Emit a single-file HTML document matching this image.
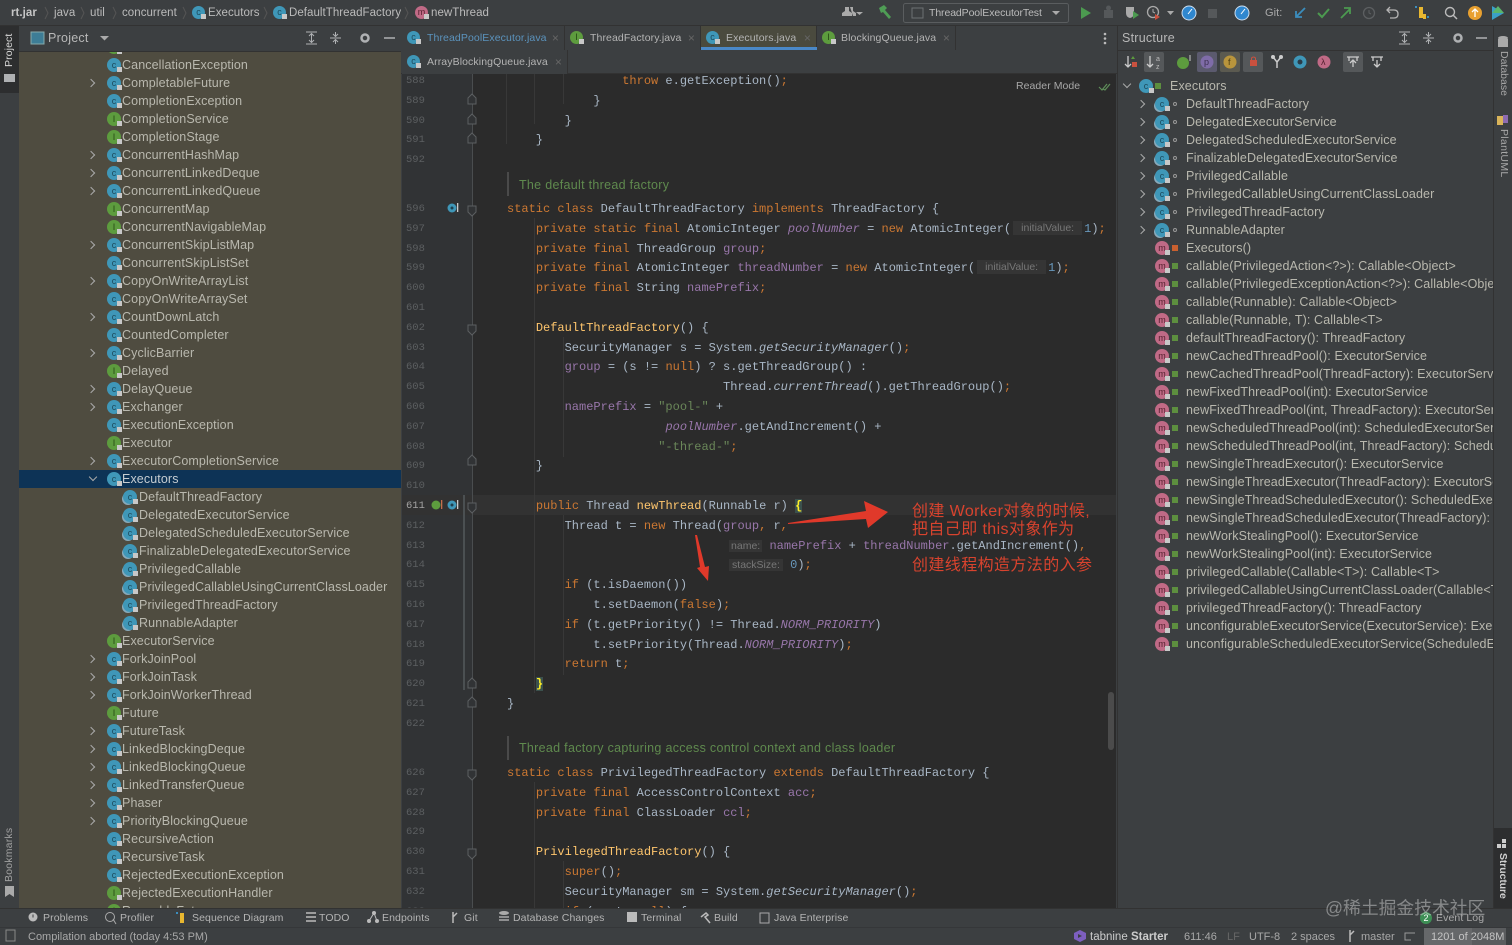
<!DOCTYPE html>
<html><head><meta charset="utf-8"><style>
*{box-sizing:border-box}
html,body{margin:0;padding:0;width:1512px;height:945px;overflow:hidden;background:#3c3f41;font-family:"Liberation Sans","Noto Sans CJK SC",sans-serif;color:#bbb}
body{filter:blur(.3px)}
.p{position:absolute}
.t{position:absolute;white-space:pre;font-size:11.5px;line-height:14px;letter-spacing:.05px}
#tree{left:19px;top:52px;width:382px;height:856px;background:#4f4c40;overflow:hidden}
#tree .in{position:absolute;top:-14px;left:0;width:382px}
.r{height:18px;line-height:19.5px;font-size:12.5px;letter-spacing:.11px;white-space:pre;position:relative;color:#b9b8ae}
.r.k{padding-left:103px}
.r.n{padding-left:120px}
.sel{background:#0d3356;color:#c6cdd2}
.a{position:absolute;width:6px;height:6px;border-top:1.3px solid #aaa;border-right:1.3px solid #aaa;transform:rotate(45deg);left:69px;top:6px}
.a.d{transform:rotate(135deg);top:4px;left:71px}
.ic{position:absolute;width:14px;height:14px;border-radius:50%;top:2px;font:normal 9px/14px "Liberation Sans",sans-serif;color:#1c4a5c;text-align:center;left:88px;background:#3f97b8;letter-spacing:0}
.ic:after{content:"";position:absolute;right:-1px;bottom:0;width:5px;height:5px;background:#c8c8c8}
.ic.g{background:#5d9c3e;color:#274a15}
.ic.m{background:#c06a86;color:#55202f}
.ic.nest{left:104px;box-shadow:-2px 2px 0 -1px #8ab}
.ln{position:absolute;left:406px;font:10.5px/19.8px "Liberation Mono",monospace;color:#5c5f61;white-space:pre}
.c{position:absolute;left:507px;font:12px/19.8px "Liberation Mono",monospace;color:#a9b7c6;white-space:pre}
.c u{text-decoration:none;color:#cc7832}.c s{text-decoration:none;color:#ffc66d}.c em{font-style:normal;color:#9876aa}.c i{font-style:italic;color:#9876aa}.c b{font-weight:normal;color:#6a8759}.c q{quotes:none;color:#6897bb}
.h{display:inline-block;width:69px;height:14px;font:10.5px/14px "Liberation Sans",sans-serif;color:#777;background:#353535;text-align:center;margin:0 2px 0 2px;vertical-align:1px}
.doc{position:absolute;left:519px;font:12.5px/20px "Liberation Sans",sans-serif;letter-spacing:.3px;color:#5f8a4e;white-space:pre}
.tab{position:absolute;height:24px;font-size:10.5px;line-height:24px;letter-spacing:.1px;white-space:pre;color:#b4b4b4;background:#3c3f41;border-right:1px solid #323232}
.tab .ic{top:5px;left:5px;width:13px;height:13px;line-height:13px}
.tab .x{position:absolute;right:5px;top:0;color:#666;font-size:12px}
.v{position:absolute;transform-origin:0 0;white-space:pre;font-size:10.5px;letter-spacing:.1px}
.b{position:absolute;top:911px;font-size:10.5px;line-height:14px;letter-spacing:.1px;white-space:pre;color:#b4b4b4}
.s{position:absolute;top:930px;font-size:11px;line-height:14px;letter-spacing:0;white-space:pre;color:#a8a8a8}
.box{position:absolute;top:52px;width:20px;height:20px;background:#55585a;border-radius:2px}
.dot{position:absolute;top:7px;width:4px;height:4px;border:1px solid #999;border-radius:50%;left:56px}
.lk{position:absolute;top:6px;left:55px;width:6px;height:6px;background:#5d8f3f}
.r.st{padding-left:69px}
</style></head><body>

<!-- top bar -->
<div class="p" style="left:0;top:0;width:1512px;height:26px;background:#3c3f41;border-bottom:1px solid #323232"></div>
<div class="t" style="left:11px;top:6px;color:#c6c6c6;font-weight:bold">rt.jar</div>
<div class="t" style="left:54px;top:6px">java</div>
<div class="t" style="left:90px;top:6px">util</div>
<div class="t" style="left:122px;top:6px">concurrent</div>
<div class="t" style="left:208px;top:6px">Executors</div>
<div class="t" style="left:289px;top:6px">DefaultThreadFactory</div>
<div class="t" style="left:431px;top:6px">newThread</div>
<i class="ic" style="left:192px;top:6px;width:13px;height:13px;line-height:13px">c</i>
<i class="ic" style="left:273px;top:6px;width:13px;height:13px;line-height:13px">c</i>
<i class="ic m" style="left:415px;top:6px;width:13px;height:13px;line-height:13px">m</i>
<svg class="p" style="left:0;top:0" width="1512" height="26" fill="none">
<g stroke="#555" stroke-width="1"><path d="M45 7l3 6-3 6M81 7l3 6-3 6M113 7l3 6-3 6M183 7l3 6-3 6M264 7l3 6-3 6M405 7l3 6-3 6"/></g>
<path d="M842 16v-3l3-2v-4h4v4l3 2v3zM850 7h3v4l3 2v3h-3" fill="#aaa"/><path d="M856 12h7l-3.500 3z" fill="#aaa"/>
<path d="M879 8l5-3 3 3-2 2 6 7-2 2-6-7-2 1z" fill="#4f9d55"/>
<rect x="903.500" y="3.500" width="165" height="19" rx="2" stroke="#5a5d5f"/><rect x="912" y="8" width="11" height="10" stroke="#6d7072"/><path d="M1052 11h8l-4 4z" fill="#aaa"/>
<path d="M1081 7l10 6-10 6z" fill="#4c9a50"/>
<path d="M1104 10h9v8h-9z" fill="#55585a"/><circle cx="1108.500" cy="8" r="2.500" fill="#55585a"/>
<path d="M1126 7h8v6q0 4-4 5-4-1-4-5z" fill="#aaa"/><path d="M1133 11l6 4-6 4z" fill="#4c9a50"/>
<circle cx="1153" cy="12" r="5.500" stroke="#aaa" stroke-width="1.300"/><path d="M1153 9v3l2 1" stroke="#aaa"/><path d="M1155 14l5 3-5 3z" fill="#c9513f"/>
<path d="M1167 11h7l-3.500 4z" fill="#aaa"/>
<circle cx="1189" cy="13" r="7" fill="#2f87cf" stroke="#cde" stroke-width="1"/><path d="M1192 9l-4 5" stroke="#fff"/>
<rect x="1208" y="9" width="9" height="9" fill="#55585a"/>
<circle cx="1242" cy="13" r="7" fill="#2f87cf" stroke="#cde" stroke-width="1"/><path d="M1245 9l-4 5" stroke="#fff"/>
<path d="M1305 8l-9 9M1296 11v6h6" stroke="#3b8dbd" stroke-width="1.800"/>
<path d="M1318 13l4 4 7-8" stroke="#4c9a50" stroke-width="2"/>
<path d="M1341 18l9-9M1344 8h6v6" stroke="#4c9a50" stroke-width="1.800"/>
<circle cx="1369" cy="13" r="5.500" stroke="#5c5f61" stroke-width="1.300"/><path d="M1369 10v3l2 1" stroke="#5c5f61"/>
<path d="M1390 7l-3 3 3 3M1387 10h7q4 0 4 4t-4 4h-4" stroke="#b4b4b4" stroke-width="1.300"/>
<rect x="1419" y="7" width="4" height="11" fill="#e8b730"/><rect x="1423" y="14" width="3" height="5" fill="#e8b730"/><path d="M1417 7h-2M1429 17h-2" stroke="#3b8dbd" stroke-width="2"/>
<circle cx="1450" cy="12" r="4.500" stroke="#bbb" stroke-width="1.400"/><path d="M1453 15l4 4" stroke="#bbb" stroke-width="1.500"/>
<circle cx="1475" cy="13" r="7" fill="#e8a030"/><path d="M1475 17v-7M1472 12l3-3 3 3" stroke="#fff" stroke-width="1.300"/>
<path d="M1492 6l12 7-12 7z" fill="#3aa0c8"/><path d="M1492 13l6-7 6 7z" fill="#5ab56c"/>
</svg>
<div class="t" style="left:929px;top:6px;font-size:10.5px;letter-spacing:-.1px">ThreadPoolExecutorTest</div>
<div class="t" style="left:1265px;top:6px;font-size:11px;color:#aaa">Git:</div>

<!-- left strip -->
<div class="p" style="left:0;top:26px;width:19px;height:882px;background:#3c3f41"></div>
<div class="p" style="left:0;top:26px;width:19px;height:67px;background:#2d2e2f"></div>
<div class="v" style="left:3px;top:67px;transform:rotate(-90deg);color:#d8d8d8">Project</div>
<div class="p" style="left:4px;top:74px;width:11px;height:8px;background:#afb1b3"></div>
<div class="v" style="left:3px;top:882px;transform:rotate(-90deg);color:#a0a0a0;letter-spacing:.2px">Bookmarks</div>
<svg class="p" style="left:5px;top:886px" width="10" height="12"><path d="M0 0h9v11l-4.500-3-4.500 3z" fill="#aaa"/></svg>

<!-- project header -->
<div class="p" style="left:19px;top:26px;width:383px;height:26px;background:#3c3f41;border-bottom:1px solid #323232"></div>
<svg class="p" style="left:19px;top:26px" width="383" height="26" fill="none">
<rect x="12" y="6" width="13" height="12" fill="#3d7d96" stroke="#8aa"/><path d="M81 10h9l-4.500 4.500z" fill="#aaa"/>
<path d="M287 6h11M287 18h11M292.500 8v8M290 10l2.500-2.500 2.500 2.500M290 14l2.500 2.500 2.500-2.500" stroke="#afb1b3"/>
<path d="M311 12h11M316.500 6v4M316.500 14v4M314 8l2.500 2.500 2.500-2.500M314 16l2.500-2.500 2.500 2.500" stroke="#afb1b3"/>
<circle cx="346" cy="12" r="3.500" stroke="#afb1b3" stroke-width="2.500"/>
<path d="M365 12h11" stroke="#afb1b3" stroke-width="1.500"/>
</svg>
<div class="t" style="left:48px;top:31px;font-size:12.5px;color:#b8b8b8;letter-spacing:.25px">Project</div>

<!-- project tree -->
<div id="tree" class="p"><div class="in">
<div class="r k">Callable<i class="ic g">I</i></div>
<div class="r k">CancellationException<i class="ic">c</i></div>
<div class="r k"><b class="a"></b>CompletableFuture<i class="ic">c</i></div>
<div class="r k">CompletionException<i class="ic">c</i></div>
<div class="r k">CompletionService<i class="ic g">I</i></div>
<div class="r k">CompletionStage<i class="ic g">I</i></div>
<div class="r k"><b class="a"></b>ConcurrentHashMap<i class="ic">c</i></div>
<div class="r k"><b class="a"></b>ConcurrentLinkedDeque<i class="ic">c</i></div>
<div class="r k"><b class="a"></b>ConcurrentLinkedQueue<i class="ic">c</i></div>
<div class="r k">ConcurrentMap<i class="ic g">I</i></div>
<div class="r k">ConcurrentNavigableMap<i class="ic g">I</i></div>
<div class="r k"><b class="a"></b>ConcurrentSkipListMap<i class="ic">c</i></div>
<div class="r k">ConcurrentSkipListSet<i class="ic">c</i></div>
<div class="r k"><b class="a"></b>CopyOnWriteArrayList<i class="ic">c</i></div>
<div class="r k">CopyOnWriteArraySet<i class="ic">c</i></div>
<div class="r k"><b class="a"></b>CountDownLatch<i class="ic">c</i></div>
<div class="r k">CountedCompleter<i class="ic">c</i></div>
<div class="r k"><b class="a"></b>CyclicBarrier<i class="ic">c</i></div>
<div class="r k">Delayed<i class="ic g">I</i></div>
<div class="r k"><b class="a"></b>DelayQueue<i class="ic">c</i></div>
<div class="r k"><b class="a"></b>Exchanger<i class="ic">c</i></div>
<div class="r k">ExecutionException<i class="ic">c</i></div>
<div class="r k">Executor<i class="ic g">I</i></div>
<div class="r k"><b class="a"></b>ExecutorCompletionService<i class="ic">c</i></div>
<div class="r k sel"><b class="a d"></b>Executors<i class="ic">c</i></div>
<div class="r n">DefaultThreadFactory<i class="ic nest">c</i></div>
<div class="r n">DelegatedExecutorService<i class="ic nest">c</i></div>
<div class="r n">DelegatedScheduledExecutorService<i class="ic nest">c</i></div>
<div class="r n">FinalizableDelegatedExecutorService<i class="ic nest">c</i></div>
<div class="r n">PrivilegedCallable<i class="ic nest">c</i></div>
<div class="r n">PrivilegedCallableUsingCurrentClassLoader<i class="ic nest">c</i></div>
<div class="r n">PrivilegedThreadFactory<i class="ic nest">c</i></div>
<div class="r n">RunnableAdapter<i class="ic nest">c</i></div>
<div class="r k">ExecutorService<i class="ic g">I</i></div>
<div class="r k"><b class="a"></b>ForkJoinPool<i class="ic">c</i></div>
<div class="r k"><b class="a"></b>ForkJoinTask<i class="ic">c</i></div>
<div class="r k"><b class="a"></b>ForkJoinWorkerThread<i class="ic">c</i></div>
<div class="r k">Future<i class="ic g">I</i></div>
<div class="r k"><b class="a"></b>FutureTask<i class="ic">c</i></div>
<div class="r k"><b class="a"></b>LinkedBlockingDeque<i class="ic">c</i></div>
<div class="r k"><b class="a"></b>LinkedBlockingQueue<i class="ic">c</i></div>
<div class="r k"><b class="a"></b>LinkedTransferQueue<i class="ic">c</i></div>
<div class="r k"><b class="a"></b>Phaser<i class="ic">c</i></div>
<div class="r k"><b class="a"></b>PriorityBlockingQueue<i class="ic">c</i></div>
<div class="r k">RecursiveAction<i class="ic">c</i></div>
<div class="r k">RecursiveTask<i class="ic">c</i></div>
<div class="r k">RejectedExecutionException<i class="ic">c</i></div>
<div class="r k">RejectedExecutionHandler<i class="ic g">I</i></div>
<div class="r k">RunnableFuture<i class="ic g">I</i></div>
</div></div>

<!-- tabs -->
<div class="p" style="left:401px;top:26px;width:716px;height:48px;background:#3c3f41;border-bottom:1px solid #323232"></div>
<div class="tab" style="left:402px;top:26px;width:163px;padding-left:25px;color:#5b93bd"><i class="ic">c</i>ThreadPoolExecutor.java<span class="x">×</span></div>
<div class="tab" style="left:565px;top:26px;width:136px;padding-left:25px"><i class="ic g">I</i>ThreadFactory.java<span class="x">×</span></div>
<div class="tab" style="left:701px;top:26px;width:116px;padding-left:25px;background:#4a4a3e"><i class="ic">c</i>Executors.java<span class="x">×</span></div>
<div class="p" style="left:701px;top:47px;width:116px;height:3px;background:#4a88c7"></div>
<div class="tab" style="left:817px;top:26px;width:139px;padding-left:24px"><i class="ic g">I</i>BlockingQueue.java<span class="x">×</span></div>
<div class="tab" style="left:402px;top:50px;width:166px;padding-left:25px"><i class="ic">c</i>ArrayBlockingQueue.java<span class="x">×</span></div>
<svg class="p" style="left:1103px;top:32px" width="4" height="14"><circle cx="2" cy="2" r="1.300" fill="#bbb"/><circle cx="2" cy="6.500" r="1.300" fill="#bbb"/><circle cx="2" cy="11" r="1.300" fill="#bbb"/></svg>

<!-- editor -->
<div class="p" style="left:402px;top:74px;width:714px;height:834px;background:#2b2b2b"></div>
<div class="p" style="left:402px;top:74px;width:71px;height:834px;background:#313335"></div>
<div class="p" style="left:402px;top:495px;width:714px;height:20px;background:#323232"></div>
<div class="p" style="left:463px;top:495px;width:2px;height:195px;background:#4b5052"></div>
<div class="p" style="left:472px;top:74px;width:1px;height:834px;background:#4a4d4f"></div>
<div class="p" style="left:506px;top:74px;width:1px;height:70px;background:#383838"></div>
<div class="p" style="left:534px;top:74px;width:1px;height:50px;background:#383838"></div>
<div class="p" style="left:563px;top:74px;width:1px;height:30px;background:#383838"></div>
<div class="p" style="left:534px;top:218px;width:1px;height:475px;background:#383838"></div>
<div class="p" style="left:563px;top:337px;width:1px;height:120px;background:#383838"></div>
<div class="p" style="left:563px;top:515px;width:1px;height:160px;background:#383838"></div>
<div class="p" style="left:507px;top:172px;width:2px;height:24px;background:#4a4a4a"></div>
<div class="p" style="left:507px;top:736px;width:2px;height:24px;background:#4a4a4a"></div>
<div class="p" style="left:534px;top:782px;width:1px;height:126px;background:#383838"></div>
<div class="p" style="left:563px;top:861px;width:1px;height:47px;background:#383838"></div>

<svg class="p" style="left:402px;top:76px" width="100" height="832" fill="#313335" stroke="#5c5f61">
<path d="M66 22v6h8v-6l-4-4zM66 42v6h8v-6l-4-4zM66 61v6h8v-6l-4-4zM66 130v6l4 4 4-4v-6zM66 249v6l4 4 4-4v-6zM66 383v6h8v-6l-4-4zM66 427v6l4 4 4-4v-6zM66 606v6h8v-6l-4-4zM66 625v6h8v-6l-4-4zM66 694v6l4 4 4-4v-6zM66 773v6l4 4 4-4v-6z"/>
<g stroke="none"><circle cx="50" cy="132" r="4.500" fill="#3f97b8"/><circle cx="50" cy="132" r="1.500" fill="#1f3f4d"/><rect x="55" y="127" width="1.300" height="9" fill="#ccc"/>
<circle cx="34" cy="429" r="4.500" fill="#5d9c3e"/><rect x="39" y="424" width="1.300" height="9" fill="#c76e4b"/>
<circle cx="50" cy="429" r="4.500" fill="#3f97b8"/><circle cx="50" cy="429" r="1.500" fill="#1f3f4d"/><rect x="55" y="424" width="1.300" height="9" fill="#ccc"/></g>
</svg>

<div class="ln" style="top:72px">588
589
590
591
592</div>
<div class="ln" style="top:200.100px">596
597
598
599
600
601
602
603
604
605
606
607
608
609
610
<span style="color:#a4a3a3">611</span>
612
613
614
615
616
617
618
619
620
621
622</div>
<div class="ln" style="top:764px">626
627
628
629
630
631
632
633</div>

<div class="c" style="top:72px">                <u>throw</u> e.getException()<u>;</u>
            }
        }
    }</div>
<div class="doc" style="top:175px">The default thread factory</div>
<div class="c" style="top:200.100px"><u>static class</u> DefaultThreadFactory <u>implements</u> ThreadFactory {
    <u>private static final</u> AtomicInteger <i>poolNumber</i> = <u>new</u> AtomicInteger(<span class="h">initialValue:</span><q>1</q>)<u>;</u>
    <u>private final</u> ThreadGroup <em>group</em><u>;</u>
    <u>private final</u> AtomicInteger <em>threadNumber</em> = <u>new</u> AtomicInteger(<span class="h">initialValue:</span><q>1</q>)<u>;</u>
    <u>private final</u> String <em>namePrefix</em><u>;</u>

    <s>DefaultThreadFactory</s>() {
        SecurityManager s = System.<span style="font-style:italic">getSecurityManager</span>()<u>;</u>
        <em>group</em> = (s != <u>null</u>) ? s.getThreadGroup() :
                              Thread.<span style="font-style:italic">currentThread</span>().getThreadGroup()<u>;</u>
        <em>namePrefix</em> = <b>"pool-"</b> +
                      <i>poolNumber</i>.getAndIncrement() +
                     <b>"-thread-"</b><u>;</u>
    }

    <u>public</u> Thread <s>newThread</s>(Runnable r) <span style="background:#3b514d;color:#ffef28;font-weight:bold">{</span>
        Thread t = <u>new</u> Thread(<em>group</em><u>,</u> r<u>,</u>
                              <span style="display:inline-block;width:6px"></span><span style="font:10.5px 'Liberation Sans',sans-serif;color:#777;background:#353535;padding:0 2px">name:</span> <em>namePrefix</em> + <em>threadNumber</em>.getAndIncrement()<u>,</u>
                              <span style="display:inline-block;width:6px"></span><span style="font:10.5px 'Liberation Sans',sans-serif;color:#777;background:#353535;padding:0 3px">stackSize:</span> <q>0</q>)<u>;</u>
        <u>if</u> (t.isDaemon())
            t.setDaemon(<u>false</u>)<u>;</u>
        <u>if</u> (t.getPriority() != Thread.<i>NORM_PRIORITY</i>)
            t.setPriority(Thread.<i>NORM_PRIORITY</i>)<u>;</u>
        <u>return</u> t<u>;</u>
    <span style="background:#3b514d;color:#ffef28;font-weight:bold">}</span>
}</div>
<div class="doc" style="top:738px">Thread factory capturing access control context and class loader</div>
<div class="c" style="top:764px;height:144px;overflow:hidden"><u>static class</u> PrivilegedThreadFactory <u>extends</u> DefaultThreadFactory {
    <u>private final</u> AccessControlContext <em>acc</em><u>;</u>
    <u>private final</u> ClassLoader <em>ccl</em><u>;</u>

    <s>PrivilegedThreadFactory</s>() {
        <u>super</u>()<u>;</u>
        SecurityManager sm = System.<span style="font-style:italic">getSecurityManager</span>()<u>;</u>
        <u>if</u> (sm != <u>null</u>) {</div>
<div class="t" style="left:1016px;top:79px;font-size:10.500px;color:#a8a8a8">Reader Mode</div>
<svg class="p" style="left:1098px;top:81px" width="14" height="12" fill="none"><path d="M1 6l3 3 5-6M5 8l2 1 5-6" stroke="#5f8f5a" stroke-width="1.200"/></svg>
<div class="p" style="left:1108px;top:692px;width:6px;height:58px;background:#4b4b4b;border-radius:3px"></div>

<!-- annotations -->
<svg class="p" style="left:680px;top:495px" width="220" height="95"><path d="M108 28L186 16 184 6 208 17 188 33 186 24 108 29z" fill="#e0392a"/><path d="M15 40L20 72 17 73 28 86 29 71 25 72 17 40z" fill="#e0392a"/></svg>
<div class="p" style="left:912px;top:502px;font-size:16px;line-height:20px;color:#d8432e;white-space:pre;letter-spacing:.4px">创建 Worker对象的时候,</div>
<div class="p" style="left:912px;top:520px;font-size:16px;line-height:20px;color:#d8432e;white-space:pre;letter-spacing:.4px">把自己即 this对象作为</div>
<div class="p" style="left:912px;top:556px;font-size:16px;line-height:20px;color:#d8432e;white-space:pre;letter-spacing:.4px">创建线程构造方法的入参</div>

<!-- structure -->
<div class="p" style="left:1117px;top:26px;width:376px;height:882px;background:#3c3f41;border-left:1px solid #323232"></div>
<div class="p" style="left:1117px;top:50px;width:376px;height:1px;background:#323232"></div>
<div class="t" style="left:1122px;top:31px;font-size:12.500px;color:#b8b8b8;letter-spacing:.25px">Structure</div>
<svg class="p" style="left:1395px;top:26px" width="100" height="26" fill="none">
<path d="M4 6h11M4 18h11M9.500 8v8M7 10l2.500-2.500 2.500 2.500M7 14l2.500 2.500 2.500-2.500" stroke="#afb1b3"/>
<path d="M28 12h11M33.500 6v4M33.500 14v4M31 8l2.500 2.500 2.500-2.500M31 16l2.500-2.500 2.500 2.500" stroke="#afb1b3"/>
<circle cx="63" cy="12" r="3.500" stroke="#afb1b3" stroke-width="2.500"/>
<path d="M81 12h11" stroke="#afb1b3" stroke-width="1.500"/>
</svg>
<div class="box" style="left:1144px"></div><div class="box" style="left:1197px;background:#5b5a6e"></div><div class="box" style="left:1220px;background:#5b5a50"></div><div class="box" style="left:1243px"></div><div class="box" style="left:1343px"></div>
<svg class="p" style="left:1117px;top:52px" width="280" height="20" fill="none">
<path d="M11 4v11M8 12l3 3 3-3" stroke="#ccc" stroke-width="1.300"/><path d="M16 4l2 3h-4z" fill="#5d9c3e"/><rect x="15" y="10" width="5" height="5" fill="#c9513f"/>
<path d="M33 4v11M30 12l3 3 3-3" stroke="#ccc" stroke-width="1.300"/><text x="39" y="9" fill="#bbb" font-size="7" font-family="Liberation Sans">a</text><text x="39" y="17" fill="#bbb" font-size="7" font-family="Liberation Sans">z</text>
<circle cx="66" cy="11" r="6" fill="#5d9c3e"/><path d="M73 3v6" stroke="#ccc"/>
<circle cx="90" cy="10" r="6.500" fill="#7f6ca8"/><text x="87" y="13" fill="#3c3050" font-size="9" font-family="Liberation Sans">p</text>
<circle cx="113" cy="10" r="6.500" fill="#b9953c"/><text x="111" y="13" fill="#4d3e12" font-size="9" font-family="Liberation Sans">f</text>
<rect x="133" y="8" width="7" height="6" fill="#c9513f"/><path d="M134.500 8V6q2-2 4 0v2" stroke="#c9513f"/>
<circle cx="156" cy="5" r="2" fill="#ccc"/><circle cx="164" cy="5" r="2" fill="#ccc"/><path d="M156 5l4 5 4-5M160 10v6" stroke="#ccc" stroke-width="1.500"/>
<circle cx="183" cy="10" r="6.500" fill="#3f97b8"/><circle cx="183" cy="10" r="2.500" fill="#2a3c48"/>
<circle cx="207" cy="10" r="6.500" fill="#c06a86"/><text x="204" y="13" fill="#55202f" font-size="9" font-family="Liberation Sans">λ</text>
<path d="M230 5h12M232 5v4M240 5v4M236 15V9M233 11l3-3 3 3" stroke="#ccc" stroke-width="1.300"/>
<path d="M254 5h12M256 5v4M264 5v4M260 8v7M257 12l3 3 3-3" stroke="#ccc" stroke-width="1.300"/>
</svg>
<div class="p" style="left:1117px;top:77px;width:376px;height:580px;overflow:hidden">
<div class="r" style="padding-left:53px"><b class="a d" style="left:7px"></b><i class="ic" style="left:22px">c</i><span class="lk" style="left:38px"></span>Executors</div>
<div class="r st"><b class="a" style="left:21px"></b><i class="ic nest" style="left:38px">c</i><span class="dot"></span>DefaultThreadFactory</div>
<div class="r st"><b class="a" style="left:21px"></b><i class="ic nest" style="left:38px">c</i><span class="dot"></span>DelegatedExecutorService</div>
<div class="r st"><b class="a" style="left:21px"></b><i class="ic nest" style="left:38px">c</i><span class="dot"></span>DelegatedScheduledExecutorService</div>
<div class="r st"><b class="a" style="left:21px"></b><i class="ic nest" style="left:38px">c</i><span class="dot"></span>FinalizableDelegatedExecutorService</div>
<div class="r st"><b class="a" style="left:21px"></b><i class="ic nest" style="left:38px">c</i><span class="dot"></span>PrivilegedCallable</div>
<div class="r st"><b class="a" style="left:21px"></b><i class="ic nest" style="left:38px">c</i><span class="dot"></span>PrivilegedCallableUsingCurrentClassLoader</div>
<div class="r st"><b class="a" style="left:21px"></b><i class="ic nest" style="left:38px">c</i><span class="dot"></span>PrivilegedThreadFactory</div>
<div class="r st"><b class="a" style="left:21px"></b><i class="ic nest" style="left:38px">c</i><span class="dot"></span>RunnableAdapter</div>
<div class="r st"><i class="ic m" style="left:38px">m</i><span class="lk" style="background:#c9602f"></span>Executors()</div>
<div class="r st"><i class="ic m" style="left:38px">m</i><span class="lk"></span>callable(PrivilegedAction&lt;?&gt;): Callable&lt;Object&gt;</div>
<div class="r st"><i class="ic m" style="left:38px">m</i><span class="lk"></span>callable(PrivilegedExceptionAction&lt;?&gt;): Callable&lt;Object&gt;</div>
<div class="r st"><i class="ic m" style="left:38px">m</i><span class="lk"></span>callable(Runnable): Callable&lt;Object&gt;</div>
<div class="r st"><i class="ic m" style="left:38px">m</i><span class="lk"></span>callable(Runnable, T): Callable&lt;T&gt;</div>
<div class="r st"><i class="ic m" style="left:38px">m</i><span class="lk"></span>defaultThreadFactory(): ThreadFactory</div>
<div class="r st"><i class="ic m" style="left:38px">m</i><span class="lk"></span>newCachedThreadPool(): ExecutorService</div>
<div class="r st"><i class="ic m" style="left:38px">m</i><span class="lk"></span>newCachedThreadPool(ThreadFactory): ExecutorService</div>
<div class="r st"><i class="ic m" style="left:38px">m</i><span class="lk"></span>newFixedThreadPool(int): ExecutorService</div>
<div class="r st"><i class="ic m" style="left:38px">m</i><span class="lk"></span>newFixedThreadPool(int, ThreadFactory): ExecutorService</div>
<div class="r st"><i class="ic m" style="left:38px">m</i><span class="lk"></span>newScheduledThreadPool(int): ScheduledExecutorService</div>
<div class="r st"><i class="ic m" style="left:38px">m</i><span class="lk"></span>newScheduledThreadPool(int, ThreadFactory): ScheduledExecutorService</div>
<div class="r st"><i class="ic m" style="left:38px">m</i><span class="lk"></span>newSingleThreadExecutor(): ExecutorService</div>
<div class="r st"><i class="ic m" style="left:38px">m</i><span class="lk"></span>newSingleThreadExecutor(ThreadFactory): ExecutorService</div>
<div class="r st"><i class="ic m" style="left:38px">m</i><span class="lk"></span>newSingleThreadScheduledExecutor(): ScheduledExecutorService</div>
<div class="r st"><i class="ic m" style="left:38px">m</i><span class="lk"></span>newSingleThreadScheduledExecutor(ThreadFactory): ScheduledExecutorService</div>
<div class="r st"><i class="ic m" style="left:38px">m</i><span class="lk"></span>newWorkStealingPool(): ExecutorService</div>
<div class="r st"><i class="ic m" style="left:38px">m</i><span class="lk"></span>newWorkStealingPool(int): ExecutorService</div>
<div class="r st"><i class="ic m" style="left:38px">m</i><span class="lk"></span>privilegedCallable(Callable&lt;T&gt;): Callable&lt;T&gt;</div>
<div class="r st"><i class="ic m" style="left:38px">m</i><span class="lk"></span>privilegedCallableUsingCurrentClassLoader(Callable&lt;T&gt;): Callable&lt;T&gt;</div>
<div class="r st"><i class="ic m" style="left:38px">m</i><span class="lk"></span>privilegedThreadFactory(): ThreadFactory</div>
<div class="r st"><i class="ic m" style="left:38px">m</i><span class="lk"></span>unconfigurableExecutorService(ExecutorService): ExecutorService</div>
<div class="r st"><i class="ic m" style="left:38px">m</i><span class="lk"></span>unconfigurableScheduledExecutorService(ScheduledExecutorService): ScheduledExecutorService</div>
</div>

<!-- right strip -->
<div class="p" style="left:1493px;top:26px;width:19px;height:882px;background:#3c3f41;border-left:1px solid #323232"></div>
<div class="p" style="left:1494px;top:828px;width:18px;height:80px;background:#2d2e2f"></div>
<div class="v" style="left:1510px;top:51px;transform:rotate(90deg);font-size:10.500px;color:#a8a8a8;letter-spacing:0">Database</div>
<div class="v" style="left:1510px;top:129px;transform:rotate(90deg);font-size:10.500px;color:#a8a8a8;letter-spacing:.3px">PlantUML</div>
<div class="v" style="left:1509px;top:853px;transform:rotate(90deg);color:#d0d0d0;font-weight:bold;font-size:10.500px;letter-spacing:-.1px">Structure</div>
<svg class="p" style="left:1496px;top:36px" width="14" height="12"><ellipse cx="7" cy="2" rx="5" ry="2" fill="#aaa"/><rect x="2" y="3" width="10" height="8" fill="#aaa"/></svg>
<svg class="p" style="left:1496px;top:114px" width="14" height="14"><rect x="1" y="2" width="6" height="9" fill="#d9b45a"/><rect x="7" y="1" width="5" height="8" fill="#8d6bb0"/></svg>
<svg class="p" style="left:1497px;top:839px" width="12" height="10"><rect x="0" y="5" width="4" height="4" fill="#ccc"/><rect x="5" y="5" width="4" height="4" fill="#ccc"/><rect x="5" y="0" width="4" height="4" fill="#ccc"/></svg>

<!-- bottom -->
<div class="p" style="left:0;top:908px;width:1512px;height:37px;background:#3c3f41;border-top:1px solid #323232"></div>
<div class="p" style="left:0;top:927px;width:1512px;height:1px;background:#353739"></div>
<div class="b" style="left:43px">Problems</div><div class="b" style="left:120px">Profiler</div><div class="b" style="left:192px">Sequence Diagram</div><div class="b" style="left:319px">TODO</div><div class="b" style="left:382px">Endpoints</div><div class="b" style="left:464px">Git</div><div class="b" style="left:513px">Database Changes</div><div class="b" style="left:641px">Terminal</div><div class="b" style="left:714px">Build</div><div class="b" style="left:774px">Java Enterprise</div>
<svg class="p" style="left:0;top:908px" width="800" height="37" fill="none">
<circle cx="33" cy="9" r="4.500" fill="#bbb"/><path d="M33 6.500v3" stroke="#3c3f41"/>
<circle cx="110" cy="9" r="4.500" stroke="#aaa"/><path d="M113 11l3 5" stroke="#aaa"/>
<rect x="180" y="5" width="4" height="10" fill="#e8b730"/><path d="M178 5h-2" stroke="#3b8dbd" stroke-width="2"/>
<path d="M306 5h10M306 9h10M306 13h10" stroke="#bbb" stroke-width="1.500"/>
<circle cx="369" cy="13" r="2" fill="#bbb"/><circle cx="377" cy="13" r="2" fill="#bbb"/><circle cx="374" cy="5" r="2" fill="#bbb"/><path d="M369 13l5-8 3 8" stroke="#bbb"/>
<path d="M453 4v11M453 9l4-4" stroke="#bbb" stroke-width="1.500"/>
<ellipse cx="504" cy="5" rx="5" ry="2" fill="#aaa"/><path d="M499 9h10M499 12h10" stroke="#aaa" stroke-width="1.500"/>
<rect x="627" y="4" width="10" height="10" fill="#bbb"/>
<path d="M701 9l5-4 2 2-3 2 5 6" stroke="#bbb" stroke-width="1.500"/>
<rect x="760" y="5" width="9" height="10" stroke="#aaa"/>
<rect x="6" y="22" width="9" height="11" stroke="#888"/>
</svg>
<div class="s" style="left:28px">Compilation aborted (today 4:53 PM)</div>
<svg class="p" style="left:1073px;top:929px" width="14" height="14"><path d="M7 1l6 3v6l-6 3-6-3V4z" fill="#7d5fc0"/><path d="M5 5l4 2-4 2z" fill="#3c3f41"/></svg>
<div class="s" style="left:1090px;color:#ccc;font-size:11.5px">tabnine <b>Starter</b></div>
<div class="s" style="left:1184px">611:46</div><div class="s" style="left:1227px;color:#666">LF</div><div class="s" style="left:1249px">UTF-8</div><div class="s" style="left:1291px">2 spaces</div><div class="s" style="left:1361px">master</div>
<svg class="p" style="left:1345px;top:929px" width="70" height="14" fill="none"><path d="M5 1v12M5 6l4-4" stroke="#bbb" stroke-width="1.500"/><path d="M66 4h-6v7h6M70 4h-4" stroke="#999"/></svg>
<div class="p" style="left:1424px;top:928px;width:82px;height:17px;background:#5a5c5e"></div>
<div class="p" style="left:1424px;top:928px;width:48px;height:17px;background:#66686a"></div>
<div class="s" style="left:1431px;color:#c4c4c4">1201 of 2048M</div>
<div class="p" style="left:1420px;top:912px;width:12px;height:12px;background:#3d8f55;border-radius:50%;font-size:9px;line-height:12px;text-align:center;color:#fff">2</div>
<div class="b" style="left:1436px;top:911px;color:#aaa">Event Log</div>
<div class="p" style="left:1325px;top:897px;font-size:17.800px;line-height:22px;color:rgba(255,255,255,.38);white-space:pre">@稀土掘金技术社区</div>
</body></html>
